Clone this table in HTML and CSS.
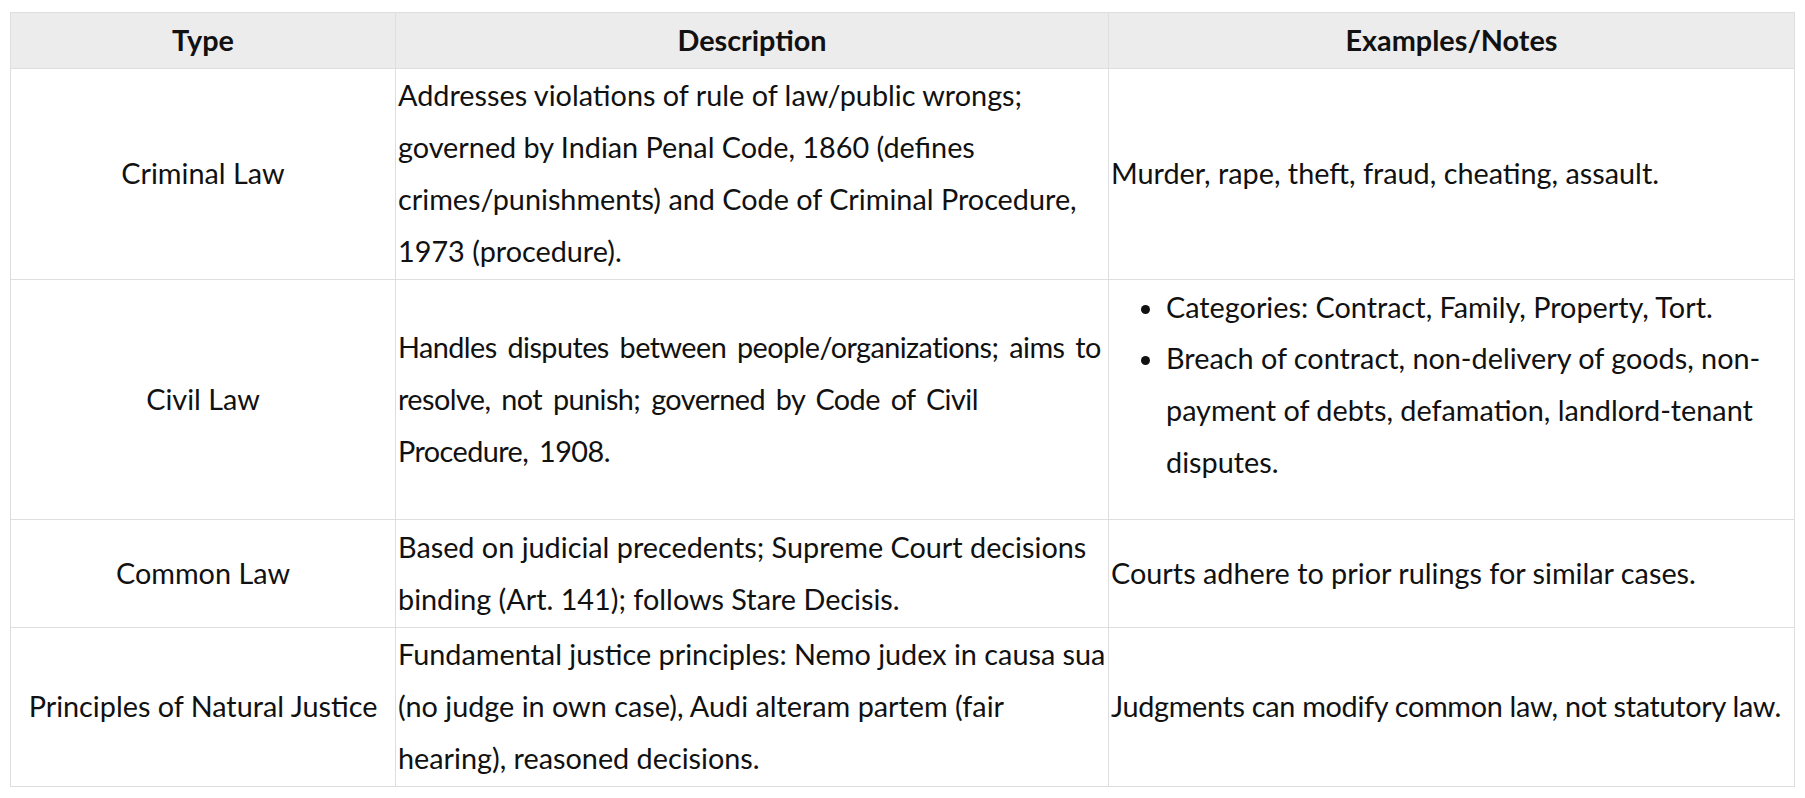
FILE: index.html
```html
<!DOCTYPE html>
<html lang="en">
<head>
<meta charset="utf-8">
<title>Types of Law</title>
<link rel="stylesheet" href="styles.css">
</head>
<body>
<div class="page">
  <table class="law-table">
    <colgroup>
      <col class="col-type">
      <col class="col-desc">
      <col class="col-notes">
    </colgroup>
    <thead>
      <tr>
        <th>Type</th>
        <th>Description</th>
        <th>Examples/Notes</th>
      </tr>
    </thead>
    <tbody>
      <tr>
        <td class="type">Criminal Law</td>
        <td>Addresses violations of rule of law/public wrongs; governed by Indian Penal Code, 1860 (defines crimes/punishments) and Code of Criminal Procedure, 1973 (procedure).</td>
        <td>Murder, rape, theft, fraud, cheating, assault.</td>
      </tr>
      <tr>
        <td class="type">Civil Law</td>
        <td class="tight-words">Handles disputes between people/organizations; aims to resolve, not punish; governed by Code of Civil Procedure, 1908.</td>
        <td>
          <ul class="notes-list">
            <li>Categories: Contract, Family, Property, Tort.</li>
            <li>Breach of contract, non-delivery of goods, non-payment of debts, defamation, landlord-tenant disputes.</li>
          </ul>
        </td>
      </tr>
      <tr>
        <td class="type">Common Law</td>
        <td>Based on judicial precedents; Supreme Court decisions binding (Art. 141); follows Stare Decisis.</td>
        <td>Courts adhere to prior rulings for similar cases.</td>
      </tr>
      <tr>
        <td class="type">Principles of Natural Justice</td>
        <td>Fundamental justice principles: Nemo judex in causa sua (no judge in own case), Audi alteram partem (fair hearing), reasoned decisions.</td>
        <td class="tight">Judgments can modify common law, not statutory law.</td>
      </tr>
    </tbody>
  </table>
</div>
</body>
</html>
```

FILE: styles.css
```css
html, body {
  margin: 0;
  padding: 0;
  background: #ffffff;
}

.page {
  padding: 12px 11px 0 10px;
  font-family: Lato, "Liberation Sans", sans-serif;
  font-size: 28.8px;
  line-height: 1.8;
  color: #111111;
}

.law-table {
  width: 1784px;
  border-collapse: collapse;
  table-layout: fixed;
}

.col-type { width: 385px; }
.col-desc { width: 713px; }
.col-notes { width: 686px; }

.law-table th,
.law-table td {
  border: 1px solid #dedede;
  padding: 1.5px 2px;
  vertical-align: middle;
  text-align: left;
}

.law-table th {
  background: #ececec;
  font-weight: 700;
  text-align: center;
}

.law-table td.type {
  text-align: center;
}

.law-table td.tight {
  letter-spacing: -0.3px;
}

.law-table td.tight-words {
  letter-spacing: -0.55px;
  word-spacing: 4px;
}

.notes-list {
  margin: 0 0 1em 0;
  padding-left: 55px;
}
```
